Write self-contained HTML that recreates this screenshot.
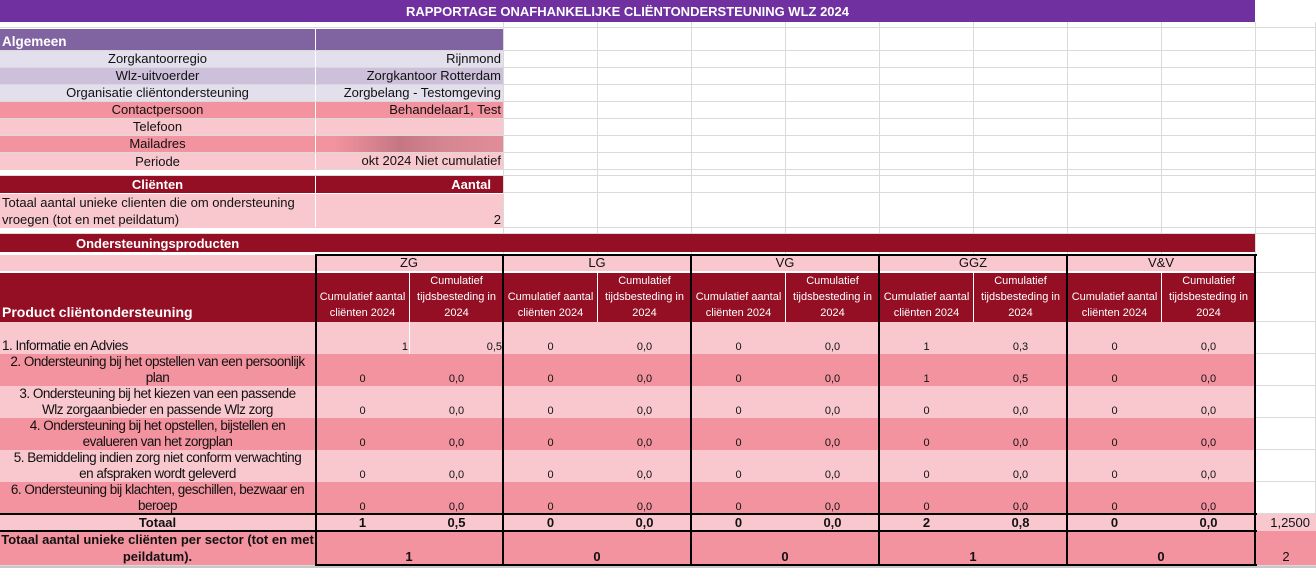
<!DOCTYPE html>
<html><head><meta charset="utf-8"><style>
body{margin:0;width:1316px;height:568px;position:relative;overflow:hidden;background:#fff;font-family:"Liberation Sans",Arial,sans-serif;}
div{position:absolute;box-sizing:border-box;}
.gv{top:22px;height:546px;width:1px;background:#dadada}
.gh{left:0;width:1316px;height:1px;background:#dadada}
.c{display:flex;font-size:13px;color:#111;line-height:17px;white-space:nowrap;overflow:hidden}
.ct{justify-content:center;text-align:center}
.rt{justify-content:flex-end;text-align:right;padding-right:2px}
.lt{justify-content:flex-start;padding-left:2px}
.bt{align-items:flex-end}
.mid{align-items:center}
.w{color:#fff;font-weight:bold}
.p1{background:#f9c8cf}.p2{background:#f2939f}.dr{background:#940f24}
.n{font-size:11px;line-height:14px}
.h{font-size:11px;line-height:16px;color:#fff;white-space:normal;align-items:flex-end;justify-content:center;text-align:center;padding:0 3px 1px}
.bk{background:#000}
.pr{font-size:13.5px;line-height:16px;text-align:center;justify-content:center;align-items:flex-end;letter-spacing:-0.5px;white-space:nowrap}
</style></head><body>
<div class="gv" style="left:503px"></div><div class="gv" style="left:597px"></div><div class="gv" style="left:691px"></div><div class="gv" style="left:785px"></div><div class="gv" style="left:879px"></div><div class="gv" style="left:973px"></div><div class="gv" style="left:1067px"></div><div class="gv" style="left:1161px"></div><div class="gv" style="left:1255px"></div><div class="gv" style="left:1315px"></div>
<div class="gh" style="top:27px"></div><div class="gh" style="top:50px"></div><div class="gh" style="top:67px"></div><div class="gh" style="top:84px"></div><div class="gh" style="top:101px"></div><div class="gh" style="top:118px"></div><div class="gh" style="top:135px"></div><div class="gh" style="top:152px"></div><div class="gh" style="top:169px"></div><div class="gh" style="top:175px"></div><div class="gh" style="top:192px"></div><div class="gh" style="top:227px"></div><div class="gh" style="top:233px"></div><div class="gh" style="top:272px"></div><div class="gh" style="top:321px"></div><div class="gh" style="top:353px"></div><div class="gh" style="top:385px"></div><div class="gh" style="top:417px"></div><div class="gh" style="top:449px"></div><div class="gh" style="top:481px"></div><div class="gh" style="top:513px"></div><div class="gh" style="top:565px"></div>

<div class="c ct mid w" style="left:0;top:0;width:1255px;height:22px;background:#7030a0">RAPPORTAGE ONAFHANKELIJKE CLIËNTONDERSTEUNING WLZ 2024</div>

<div class="c lt bt w" style="left:0;top:29px;width:315px;height:21px;background:#8064a2;font-size:13.5px">Algemeen</div>
<div class="c" style="left:316px;top:29px;width:187px;height:21px;background:#8064a2"></div>

<div class="c ct bt" style="left:0;top:51px;width:315px;height:16px;background:#e4dfec">Zorgkantoorregio</div>
<div class="c rt bt" style="left:316px;top:51px;width:187px;height:16px;background:#e4dfec">Rijnmond</div>
<div class="c ct bt" style="left:0;top:68px;width:315px;height:16px;background:#ccc0da">Wlz-uitvoerder</div>
<div class="c rt bt" style="left:316px;top:68px;width:187px;height:16px;background:#ccc0da">Zorgkantoor Rotterdam</div>
<div class="c ct bt" style="left:0;top:85px;width:315px;height:16px;background:#e4dfec">Organisatie cliëntondersteuning</div>
<div class="c rt bt" style="left:316px;top:85px;width:187px;height:16px;background:#e4dfec">Zorgbelang - Testomgeving</div>
<div class="c ct bt p2" style="left:0;top:102px;width:315px;height:16px">Contactpersoon</div>
<div class="c rt bt p2" style="left:316px;top:102px;width:187px;height:16px">Behandelaar1, Test</div>
<div class="c ct bt p1" style="left:0;top:119px;width:315px;height:16px">Telefoon</div>
<div class="c p1" style="left:316px;top:119px;width:187px;height:16px"></div>
<div class="c ct bt p2" style="left:0;top:136px;width:315px;height:16px">Mailadres</div>
<div class="c p2" style="left:316px;top:136px;width:187px;height:16px;background:linear-gradient(90deg,#f2939f 10%,#c47783 45%,#d58792 70%,#e18d98 100%)"></div>
<div class="c ct bt p1" style="left:0;top:153px;width:315px;height:17px">Periode</div>
<div class="c rt bt p1" style="left:316px;top:153px;width:187px;height:16px">okt 2024 Niet cumulatief</div>

<div class="c ct bt w dr" style="left:0;top:176px;width:315px;height:17px">Cliënten</div>
<div class="c rt bt w dr" style="left:316px;top:176px;width:187px;height:17px;padding-right:12px">Aantal</div>
<div class="c lt p1" style="left:0;top:194px;width:315px;height:34px;white-space:normal;align-items:flex-end">Totaal aantal unieke clienten die om ondersteuning vroegen (tot en met peildatum)</div>
<div class="c rt bt p1" style="left:316px;top:194px;width:187px;height:34px">2</div>

<div class="c bt w dr" style="left:0;top:234px;width:1255px;height:18px;padding-left:76px">Ondersteuningsproducten</div>

<div class="c p1" style="left:0;top:255px;width:315px;height:16px"></div>
<div class="c ct bt p1" style="left:315px;top:255px;width:188px;height:16px">ZG</div>
<div class="c ct bt p1" style="left:503px;top:255px;width:188px;height:16px">LG</div>
<div class="c ct bt p1" style="left:691px;top:255px;width:188px;height:16px">VG</div>
<div class="c ct bt p1" style="left:879px;top:255px;width:188px;height:16px">GGZ</div>
<div class="c ct bt p1" style="left:1067px;top:255px;width:188px;height:16px">V&amp;V</div>

<div class="c lt bt w dr" style="left:0;top:273px;width:1255px;height:49px;font-size:14px;padding-bottom:1px">Product cliëntondersteuning</div>
<div class="c h" style="left:315px;top:273px;width:95px;height:49px">Cumulatief aantal cliënten 2024</div>
<div class="c h" style="left:410px;top:273px;width:93px;height:49px">Cumulatief tijdsbesteding in 2024</div>
<div class="c h" style="left:503px;top:273px;width:95px;height:49px">Cumulatief aantal cliënten 2024</div>
<div class="c h" style="left:598px;top:273px;width:93px;height:49px">Cumulatief tijdsbesteding in 2024</div>
<div class="c h" style="left:691px;top:273px;width:95px;height:49px">Cumulatief aantal cliënten 2024</div>
<div class="c h" style="left:786px;top:273px;width:93px;height:49px">Cumulatief tijdsbesteding in 2024</div>
<div class="c h" style="left:879px;top:273px;width:95px;height:49px">Cumulatief aantal cliënten 2024</div>
<div class="c h" style="left:974px;top:273px;width:93px;height:49px">Cumulatief tijdsbesteding in 2024</div>
<div class="c h" style="left:1067px;top:273px;width:95px;height:49px">Cumulatief aantal cliënten 2024</div>
<div class="c h" style="left:1162px;top:273px;width:93px;height:49px">Cumulatief tijdsbesteding in 2024</div>
<div style="left:409px;top:273px;width:1px;height:49px;background:#fff"></div>
<div style="left:597px;top:273px;width:1px;height:49px;background:#fff"></div>
<div style="left:785px;top:273px;width:1px;height:49px;background:#fff"></div>
<div style="left:973px;top:273px;width:1px;height:49px;background:#fff"></div>
<div style="left:1161px;top:273px;width:1px;height:49px;background:#fff"></div>
<div style="left:0;top:271px;width:1255px;height:2px;background:#fff"></div>

<div class="p1" style="left:0;top:322px;width:1255px;height:32px"></div>
<div class="p2" style="left:0;top:354px;width:1255px;height:32px"></div>
<div class="p1" style="left:0;top:386px;width:1255px;height:32px"></div>
<div class="p2" style="left:0;top:418px;width:1255px;height:32px"></div>
<div class="p1" style="left:0;top:450px;width:1255px;height:32px"></div>
<div class="p2" style="left:0;top:482px;width:1255px;height:32px"></div>
<div style="left:409px;top:322px;width:1px;height:32px;background:#fff"></div>

<div class="c pr" style="left:0;top:322px;width:315px;height:32px;justify-content:flex-start;padding-left:2px">1. Informatie en Advies</div>
<div class="c pr" style="left:0;top:354px;width:315px;height:32px">2. Ondersteuning bij het opstellen van een persoonlijk<br>plan</div>
<div class="c pr" style="left:0;top:386px;width:315px;height:32px">3. Ondersteuning bij het kiezen van een passende<br>Wlz zorgaanbieder en passende Wlz zorg</div>
<div class="c pr" style="left:0;top:418px;width:315px;height:32px">4. Ondersteuning bij het opstellen, bijstellen en<br>evalueren van het zorgplan</div>
<div class="c pr" style="left:0;top:450px;width:315px;height:32px">5. Bemiddeling indien zorg niet conform verwachting<br>en afspraken wordt geleverd</div>
<div class="c pr" style="left:0;top:482px;width:315px;height:32px">6. Ondersteuning bij klachten, geschillen, bezwaar en<br>beroep</div>

<div class="c rt bt n" style="left:315px;top:322px;width:95px;height:32px">1</div>
<div class="c rt bt n" style="left:410px;top:322px;width:93px;height:32px;padding-right:1px">0,5</div>
<div class="c ct bt n" style="left:503px;top:322px;width:95px;height:32px">0</div><div class="c ct bt n" style="left:598px;top:322px;width:93px;height:32px">0,0</div>
<div class="c ct bt n" style="left:691px;top:322px;width:95px;height:32px">0</div><div class="c ct bt n" style="left:786px;top:322px;width:93px;height:32px">0,0</div>
<div class="c ct bt n" style="left:879px;top:322px;width:95px;height:32px">1</div><div class="c ct bt n" style="left:974px;top:322px;width:93px;height:32px">0,3</div>
<div class="c ct bt n" style="left:1067px;top:322px;width:95px;height:32px">0</div><div class="c ct bt n" style="left:1162px;top:322px;width:93px;height:32px">0,0</div>
<div class="c ct bt n" style="left:315px;top:354px;width:95px;height:32px">0</div><div class="c ct bt n" style="left:410px;top:354px;width:93px;height:32px">0,0</div>
<div class="c ct bt n" style="left:503px;top:354px;width:95px;height:32px">0</div><div class="c ct bt n" style="left:598px;top:354px;width:93px;height:32px">0,0</div>
<div class="c ct bt n" style="left:691px;top:354px;width:95px;height:32px">0</div><div class="c ct bt n" style="left:786px;top:354px;width:93px;height:32px">0,0</div>
<div class="c ct bt n" style="left:879px;top:354px;width:95px;height:32px">1</div><div class="c ct bt n" style="left:974px;top:354px;width:93px;height:32px">0,5</div>
<div class="c ct bt n" style="left:1067px;top:354px;width:95px;height:32px">0</div><div class="c ct bt n" style="left:1162px;top:354px;width:93px;height:32px">0,0</div>
<div class="c ct bt n" style="left:315px;top:386px;width:95px;height:32px">0</div><div class="c ct bt n" style="left:410px;top:386px;width:93px;height:32px">0,0</div><div class="c ct bt n" style="left:503px;top:386px;width:95px;height:32px">0</div><div class="c ct bt n" style="left:598px;top:386px;width:93px;height:32px">0,0</div><div class="c ct bt n" style="left:691px;top:386px;width:95px;height:32px">0</div><div class="c ct bt n" style="left:786px;top:386px;width:93px;height:32px">0,0</div><div class="c ct bt n" style="left:879px;top:386px;width:95px;height:32px">0</div><div class="c ct bt n" style="left:974px;top:386px;width:93px;height:32px">0,0</div><div class="c ct bt n" style="left:1067px;top:386px;width:95px;height:32px">0</div><div class="c ct bt n" style="left:1162px;top:386px;width:93px;height:32px">0,0</div>
<div class="c ct bt n" style="left:315px;top:418px;width:95px;height:32px">0</div><div class="c ct bt n" style="left:410px;top:418px;width:93px;height:32px">0,0</div><div class="c ct bt n" style="left:503px;top:418px;width:95px;height:32px">0</div><div class="c ct bt n" style="left:598px;top:418px;width:93px;height:32px">0,0</div><div class="c ct bt n" style="left:691px;top:418px;width:95px;height:32px">0</div><div class="c ct bt n" style="left:786px;top:418px;width:93px;height:32px">0,0</div><div class="c ct bt n" style="left:879px;top:418px;width:95px;height:32px">0</div><div class="c ct bt n" style="left:974px;top:418px;width:93px;height:32px">0,0</div><div class="c ct bt n" style="left:1067px;top:418px;width:95px;height:32px">0</div><div class="c ct bt n" style="left:1162px;top:418px;width:93px;height:32px">0,0</div>
<div class="c ct bt n" style="left:315px;top:450px;width:95px;height:32px">0</div><div class="c ct bt n" style="left:410px;top:450px;width:93px;height:32px">0,0</div><div class="c ct bt n" style="left:503px;top:450px;width:95px;height:32px">0</div><div class="c ct bt n" style="left:598px;top:450px;width:93px;height:32px">0,0</div><div class="c ct bt n" style="left:691px;top:450px;width:95px;height:32px">0</div><div class="c ct bt n" style="left:786px;top:450px;width:93px;height:32px">0,0</div><div class="c ct bt n" style="left:879px;top:450px;width:95px;height:32px">0</div><div class="c ct bt n" style="left:974px;top:450px;width:93px;height:32px">0,0</div><div class="c ct bt n" style="left:1067px;top:450px;width:95px;height:32px">0</div><div class="c ct bt n" style="left:1162px;top:450px;width:93px;height:32px">0,0</div>
<div class="c ct bt n" style="left:315px;top:482px;width:95px;height:32px">0</div><div class="c ct bt n" style="left:410px;top:482px;width:93px;height:32px">0,0</div><div class="c ct bt n" style="left:503px;top:482px;width:95px;height:32px">0</div><div class="c ct bt n" style="left:598px;top:482px;width:93px;height:32px">0,0</div><div class="c ct bt n" style="left:691px;top:482px;width:95px;height:32px">0</div><div class="c ct bt n" style="left:786px;top:482px;width:93px;height:32px">0,0</div><div class="c ct bt n" style="left:879px;top:482px;width:95px;height:32px">0</div><div class="c ct bt n" style="left:974px;top:482px;width:93px;height:32px">0,0</div><div class="c ct bt n" style="left:1067px;top:482px;width:95px;height:32px">0</div><div class="c ct bt n" style="left:1162px;top:482px;width:93px;height:32px">0,0</div>

<div class="p1" style="left:0;top:514px;width:1316px;height:17px"></div>
<div class="c ct bt" style="left:0;top:514px;width:315px;height:17px;font-weight:bold">Totaal</div>
<div class="c ct bt" style="left:315px;top:514px;width:95px;height:17px;font-weight:bold">1</div><div class="c ct bt" style="left:410px;top:514px;width:93px;height:17px;font-weight:bold">0,5</div>
<div class="c ct bt" style="left:503px;top:514px;width:95px;height:17px;font-weight:bold">0</div><div class="c ct bt" style="left:598px;top:514px;width:93px;height:17px;font-weight:bold">0,0</div>
<div class="c ct bt" style="left:691px;top:514px;width:95px;height:17px;font-weight:bold">0</div><div class="c ct bt" style="left:786px;top:514px;width:93px;height:17px;font-weight:bold">0,0</div>
<div class="c ct bt" style="left:879px;top:514px;width:95px;height:17px;font-weight:bold">2</div><div class="c ct bt" style="left:974px;top:514px;width:93px;height:17px;font-weight:bold">0,8</div>
<div class="c ct bt" style="left:1067px;top:514px;width:95px;height:17px;font-weight:bold">0</div><div class="c ct bt" style="left:1162px;top:514px;width:93px;height:17px;font-weight:bold">0,0</div>
<div class="c rt bt" style="left:1256px;top:514px;width:60px;height:17px;padding-right:6px">1,2500</div>

<div class="p2" style="left:0;top:531px;width:1316px;height:34px"></div>
<div class="c" style="left:0;top:531px;width:315px;height:34px;font-weight:bold;white-space:normal;text-align:center;justify-content:center;align-items:flex-end;font-size:13px">Totaal aantal unieke cliënten per sector (tot en met peildatum).</div>
<div class="c ct bt" style="left:315px;top:531px;width:188px;height:34px;font-weight:bold">1</div>
<div class="c ct bt" style="left:503px;top:531px;width:188px;height:34px;font-weight:bold">0</div>
<div class="c ct bt" style="left:691px;top:531px;width:188px;height:34px;font-weight:bold">0</div>
<div class="c ct bt" style="left:879px;top:531px;width:188px;height:34px;font-weight:bold">1</div>
<div class="c ct bt" style="left:1067px;top:531px;width:188px;height:34px;font-weight:bold">0</div>
<div class="c ct bt" style="left:1256px;top:531px;width:60px;height:34px">2</div>

<div class="bk" style="left:315px;top:254px;width:942px;height:2px"></div>
<div class="bk" style="left:0;top:513px;width:1257px;height:2px"></div>
<div class="bk" style="left:0;top:530px;width:1257px;height:2px"></div>
<div class="bk" style="left:315px;top:564px;width:942px;height:2px"></div>
<div class="bk" style="left:315px;top:254px;width:2px;height:312px"></div>
<div class="bk" style="left:502px;top:254px;width:2px;height:312px"></div>
<div class="bk" style="left:690px;top:254px;width:2px;height:312px"></div>
<div class="bk" style="left:878px;top:254px;width:2px;height:312px"></div>
<div class="bk" style="left:1066px;top:254px;width:2px;height:312px"></div>
<div class="bk" style="left:1254px;top:254px;width:2px;height:312px"></div>
<div style="left:0;top:566px;width:1316px;height:2px;background:#c8c8c8"></div>
</body></html>
